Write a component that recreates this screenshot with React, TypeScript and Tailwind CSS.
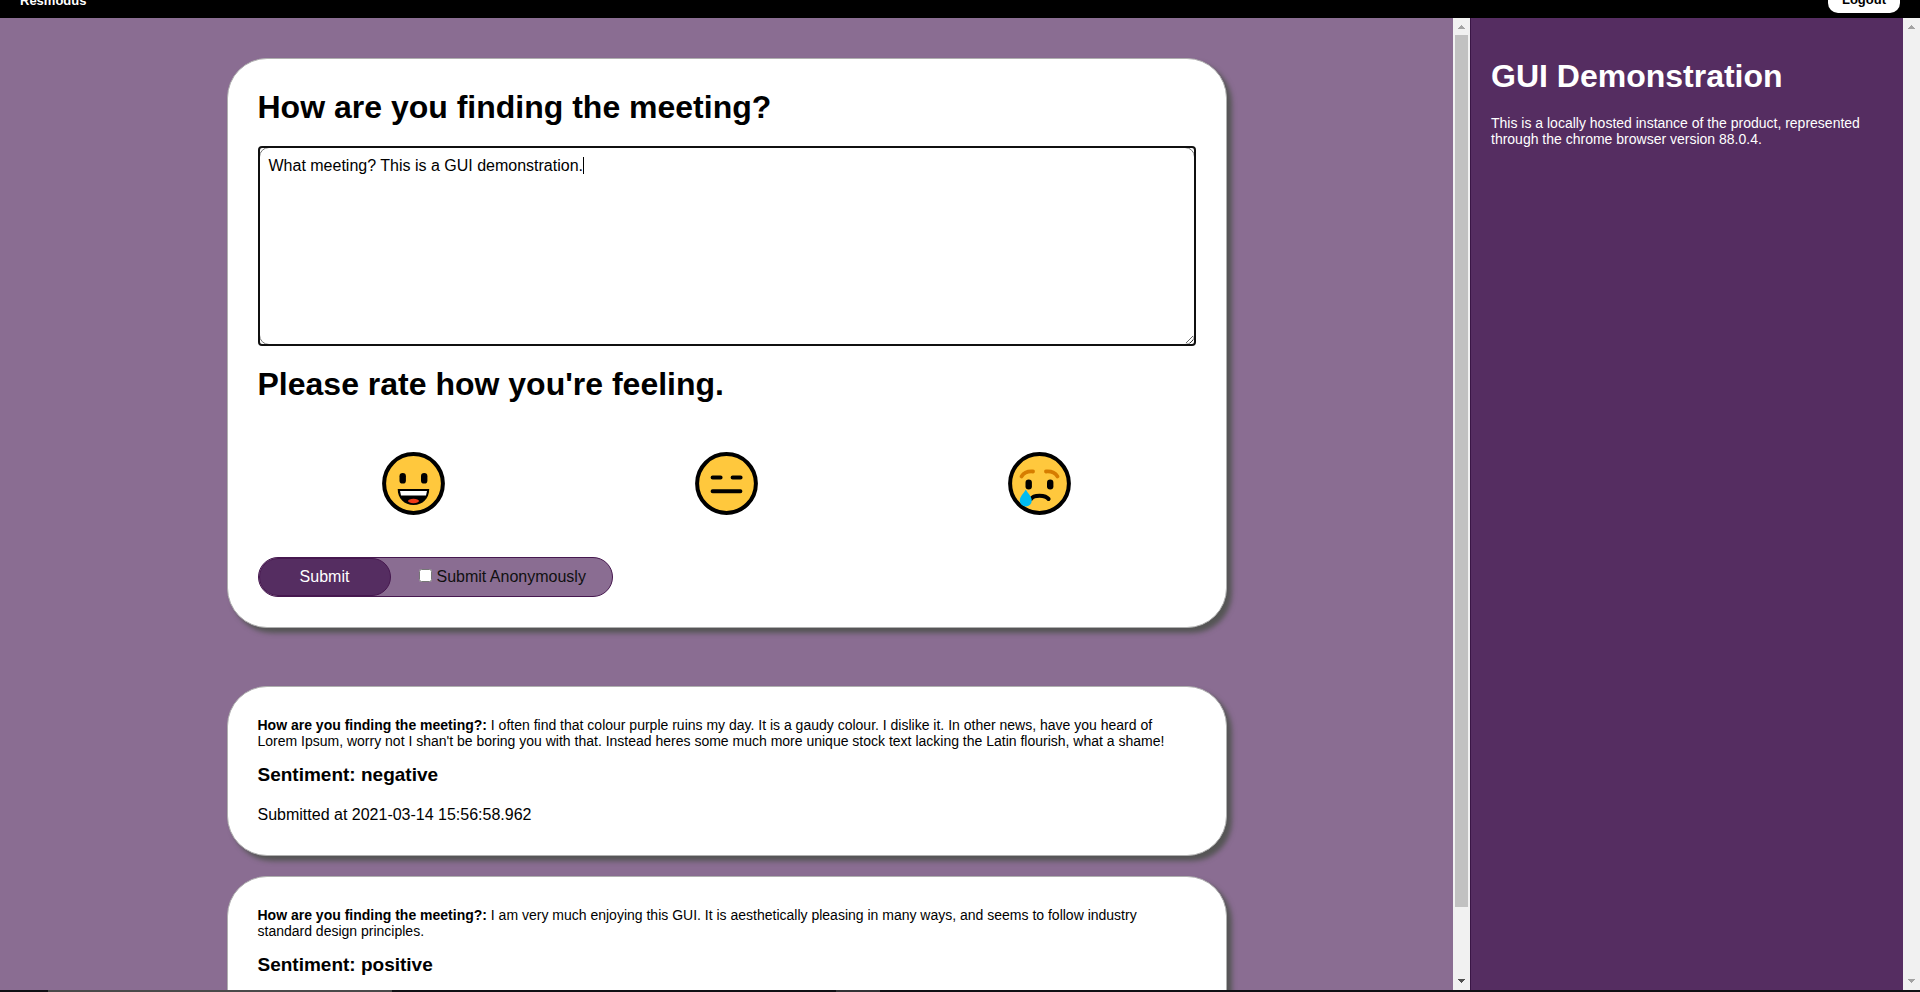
import React from "react";

type Submission = { answer: string; sentiment: string; submittedAt?: string };

const submissions: Submission[] = [
  {
    answer:
      "I often find that colour purple ruins my day. It is a gaudy colour. I dislike it. In other news, have you heard of Lorem Ipsum, worry not I shan't be boring you with that. Instead heres some much more unique stock text lacking the Latin flourish, what a shame!",
    sentiment: "negative",
    submittedAt: "2021-03-14 15:56:58.962",
  },
  {
    answer:
      "I am very much enjoying this GUI. It is aesthetically pleasing in many ways, and seems to follow industry standard design principles.",
    sentiment: "positive",
  },
];

function Face({ children }: { children: React.ReactNode }) {
  return (
    <svg viewBox="0 0 63 63" className="size-[63px]" aria-hidden="true">
      <circle cx="31.5" cy="31.5" r="29.4" fill="#ffc83d" stroke="#000" strokeWidth="4" />
      {children}
    </svg>
  );
}

function HappyFace() {
  return (
    <Face>
      <rect x="17.5" y="21" width="6.4" height="10.6" rx="3.2" />
      <rect x="39" y="21" width="6.4" height="10.6" rx="3.2" />
      <path d="M15.7 37h31.5c0 9.5-6.5 16-15.7 16s-15.8-6.5-15.8-16z" />
      <path d="M18 39h27l-1 4.500H19z" fill="#fff" />
      <ellipse cx="31.5" cy="49" rx="5.5" ry="2.2" fill="#f03a17" />
    </Face>
  );
}

function NeutralFace() {
  return (
    <Face>
      <path d="M17.600 25.500h8M37.600 25.500h8M17.600 39.200h27.800" stroke="#000" strokeWidth="4" strokeLinecap="round" />
    </Face>
  );
}

function SadFace() {
  return (
    <Face>
      <path d="M13.500 24.500c2.500-4 7-5.400 11.500-5M38 19.500c4.500-.4 9 1 11.500 5" fill="none" stroke="#d67d00" strokeWidth="3.8" strokeLinecap="round" />
      <rect x="17.500" y="27.500" width="6.400" height="10" rx="3.200" />
      <rect x="39" y="27.500" width="6.400" height="10" rx="3.200" />
      <path d="M23 47c2.500-4.500 14.500-4.500 17.600 0" fill="none" stroke="#000" strokeWidth="4" strokeLinecap="round" />
      <path d="M17.800 37.500c-2.300 4-6 7.300-6 11a6 6 0 0 0 12 0c0-3.700-3.700-7-6-11z" fill="#00bcf2" />
    </Face>
  );
}

const moods = [
  { name: "Happy", Icon: HappyFace },
  { name: "Neutral", Icon: NeutralFace },
  { name: "Sad", Icon: SadFace },
];

function ScrollTrack({ active }: { active: boolean }) {
  const arrow = active ? "fill-[#505050]" : "fill-[#a3a3a3]";
  return (
    <div className="flex w-[17px] shrink-0 flex-col items-center bg-[#f1f1f1]" aria-hidden="true">
      <svg viewBox="0 0 17 17" className="size-[17px] shrink-0 fill-[#a3a3a3]" shapeRendering="crispEdges">
        <path d="M5 11h7v-1h-1V9h-1V8H9V7H8v1H7v1H6v1H5z" />
      </svg>
      <div className="flex w-full grow flex-col px-[2px]">
        {active && <div className="h-[93%] bg-[#c1c1c1]" />}
      </div>
      <svg viewBox="0 0 17 17" className={`size-[17px] shrink-0 ${arrow}`} shapeRendering="crispEdges">
        <path d="M5 6h7v1h-1v1h-1v1H9v1H8V9H7V8H6V7H5z" />
      </svg>
    </div>
  );
}

const card =
  "w-full max-w-[1000px] shrink-0 rounded-[40px] border border-[#b0b0b0] bg-white p-[30px] shadow-[5px_5px_5px_#555]";

export default function App() {
  return (
    <div className="flex h-screen flex-col overflow-hidden bg-[#8a6d92] font-['Liberation_Sans',Arial,sans-serif] text-black">
      <header className="flex h-[18px] shrink-0 items-end justify-between bg-black px-5 pb-[5px] text-[13px] font-bold">
        <a href="#home" className="h-[22px] leading-5 text-white">Resmodus</a>
        <button type="button" className="h-[26px] rounded-[10px] bg-white px-[14px]">Logout</button>
      </header>

      <div className="flex min-h-0 grow">
        <main className="flex min-w-0 grow flex-col items-center overflow-hidden px-5 pt-10">
          <form className={`${card} mb-[58px]`} onSubmit={(e) => e.preventDefault()}>
            <label htmlFor="feedback" className="block text-[32px] leading-9 font-bold">
              How are you finding the meeting?
            </label>
            <div className="relative mt-[21px] p-px after:pointer-events-none after:absolute after:inset-0 after:rounded-[4px] after:border-2 after:border-[#101010]">
              <textarea
                id="feedback"
                className="block h-[198px] w-full resize rounded-[10px] border border-[#767676] px-[9px] py-[9px] text-[16px] leading-[18px] outline-none"
                defaultValue="What meeting? This is a GUI demonstration."
              />
              <span className="absolute top-[11px] left-[325px] h-[17px] w-px bg-black" />
            </div>
            <h2 className="mt-5 text-[32px] leading-9 font-bold">Please rate how you're feeling.</h2>
            <div className="mt-[50px] grid grid-cols-3 justify-items-center">
              {moods.map(({ name, Icon }) => (
                <button key={name} type="button" aria-label={name}>
                  <Icon />
                </button>
              ))}
            </div>
            <div className="mt-[42px] flex h-10 w-fit items-stretch overflow-hidden rounded-[20px] border border-[#46184f] bg-[#8a6d92] text-[16px]">
              <button type="submit" className="w-[132px] rounded-[20px] border border-[#46184f] bg-[#552d61] text-white">
                Submit
              </button>
              <label className="flex items-center gap-[5px] pr-[26px] pl-7 text-[#101010]">
                <input type="checkbox" className="mb-[3px] size-[13px]" />
                Submit Anonymously
              </label>
            </div>
          </form>

          {submissions.map((s) => (
            <article key={s.answer} className={`${card} mb-5 min-h-[170px]`}>
              <p className="pr-2 text-[14px] leading-4">
                <b>How are you finding the meeting?:</b> {s.answer}
              </p>
              <h3 className="mt-[15px] text-[19px] leading-[22px] font-bold">Sentiment: {s.sentiment}</h3>
              {s.submittedAt && (
                <p className="mt-5 text-[16px] leading-[18px]">Submitted at {s.submittedAt}</p>
              )}
            </article>
          ))}
        </main>
        <ScrollTrack active />

        <aside className="w-[433px] shrink-0 border-l border-[#3a1646] bg-[#552d61] px-5 pt-10 text-white">
          <h1 className="text-[32px] leading-9 font-bold">GUI Demonstration</h1>
          <p className="mt-[21px] text-[14px] leading-4">
            This is a locally hosted instance of the product, represented through the chrome browser version 88.0.4.
          </p>
        </aside>
        <ScrollTrack active={false} />
      </div>

      <div className="flex h-[2px] shrink-0 bg-[#101014] pl-12">
        <div className="w-[344px] bg-[#4a4a4a]" />
        <div className="ml-[444px] w-11 bg-[#333336]" />
      </div>
    </div>
  );
}
